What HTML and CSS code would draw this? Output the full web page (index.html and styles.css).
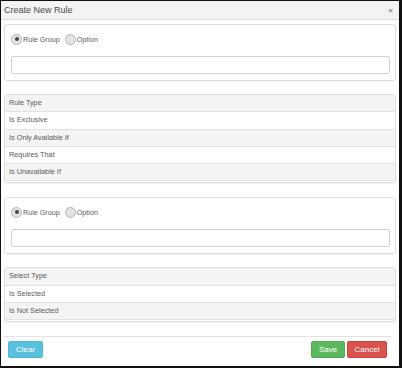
FILE: index.html
```html
<!DOCTYPE html>
<html lang="en">
  <head>
    <meta charset="UTF-8" />
    <title>Create New Rule</title>
    <link rel="stylesheet" href="styles.css">
  </head>
  <body>
    <div class="rule-modal">
      <div class="modal-header">
        <span class="modal-title">Create New Rule</span>
        <span class="close">&times;</span>
      </div>

      <div class="modal-body">
        <div class="choice-box">
          <div class="radio-row">
            <label class="radio"><span class="dot checked"></span>Rule Group</label>
            <label class="radio"><span class="dot"></span>Option</label>
          </div>
          <input type="text" class="text-input" />
        </div>

        <div class="list-panel">
          <div class="list-head">Rule Type</div>
          <div class="list-row">Is Exclusive</div>
          <div class="list-row alt">Is Only Available If</div>
          <div class="list-row">Requires That</div>
          <div class="list-row alt">Is Unavailable If</div>
        </div>

        <div class="choice-box">
          <div class="radio-row">
            <label class="radio"><span class="dot checked"></span>Rule Group</label>
            <label class="radio"><span class="dot"></span>Option</label>
          </div>
          <input type="text" class="text-input" />
        </div>

        <div class="list-panel">
          <div class="list-head">Select Type</div>
          <div class="list-row">Is Selected</div>
          <div class="list-row alt">Is Not Selected</div>
        </div>
      </div>

      <div class="modal-footer">
        <button class="btn btn-info">Clear</button>
        <span class="spacer"></span>
        <button class="btn btn-success">Save</button>
        <button class="btn btn-danger">Cancel</button>
      </div>
    </div>
  </body>
</html>
```
FILE: styles.css
```css
body {
  margin: 0;
  font-family: "Liberation Sans", Arial, sans-serif;
  color: #555;
}

.rule-modal {
  width: 402px;
  height: 368px;
  box-sizing: border-box;
  border-left: 1px solid #111;
  border-top: 1px solid #111;
  border-right: 3px solid #111;
  border-bottom: 2px solid #111;
  background: #fff;
}

.modal-header {
  height: 18px;
  display: flex;
  align-items: center;
  justify-content: space-between;
  padding: 0 6px 0 3px;
  background: #f3f3f3;
  border-bottom: 1px solid #dcdcdc;
}

.modal-title {
  font-size: 9px;
  color: #4a4a4a;
}

.close {
  font-size: 8px;
  color: #888;
  font-weight: bold;
}

.modal-body {
  padding: 4px 3px 0 3px;
}

.choice-box {
  border: 1px solid #dcdcdc;
  border-radius: 3px;
  padding: 8px 5px 6px 6px;
  box-shadow: 0 1px 1px rgba(0, 0, 0, 0.04);
}

.radio-row {
  display: flex;
  align-items: center;
  gap: 5px;
  height: 12px;
  margin-bottom: 11px;
}

.radio {
  display: flex;
  align-items: center;
  font-size: 7.2px;
  color: #5a5a5a;
}

.dot {
  width: 9px;
  height: 9px;
  border-radius: 50%;
  border: 1px solid #b5b5b5;
  background: #e4e4e4;
  margin-right: 1px;
  position: relative;
}

.dot.checked::after {
  content: "";
  position: absolute;
  left: 2.5px;
  top: 2.5px;
  width: 4px;
  height: 4px;
  border-radius: 50%;
  background: #444;
}

.text-input {
  display: block;
  box-sizing: border-box;
  width: 100%;
  height: 18px;
  margin: 0;
  border: 1px solid #d2d2d2;
  border-radius: 2px;
  background: #fff;
}

.list-panel {
  margin: 13px 0 14px;
  border: 1px solid #dcdcdc;
  border-radius: 3px;
  padding-bottom: 1px;
  box-shadow: 0 1px 1px rgba(0, 0, 0, 0.04);
}

.list-head,
.list-row {
  height: 16.3px;
  line-height: 16.3px;
  padding-left: 4px;
  font-size: 7.3px;
  color: #5a5a5a;
  border-bottom: 1px solid #e2e2e2;
}

.list-head {
  background: #f4f4f4;
}

.list-row.alt {
  background: #f4f4f4;
}

.modal-footer {
  display: flex;
  align-items: center;
  gap: 2px;
  margin: 0 8px 0 3px;
  padding: 4px 4px;
  border-top: 1px solid #e2e2e2;
}

.spacer {
  flex: 1;
}

.btn {
  height: 17px;
  padding: 0 4px;
  border-radius: 2px;
  border: 1px solid transparent;
  color: #fff;
  font-family: "Liberation Sans", Arial, sans-serif;
  font-size: 8px;
}

.btn-info {
  width: 35px;
  background: #5bc0de;
  border-color: #46b8da;
}

.btn-success {
  width: 34px;
  background: #5cb85c;
  border-color: #4cae4c;
}

.btn-danger {
  width: 40px;
  background: #d9534f;
  border-color: #d43f3a;
}
```
